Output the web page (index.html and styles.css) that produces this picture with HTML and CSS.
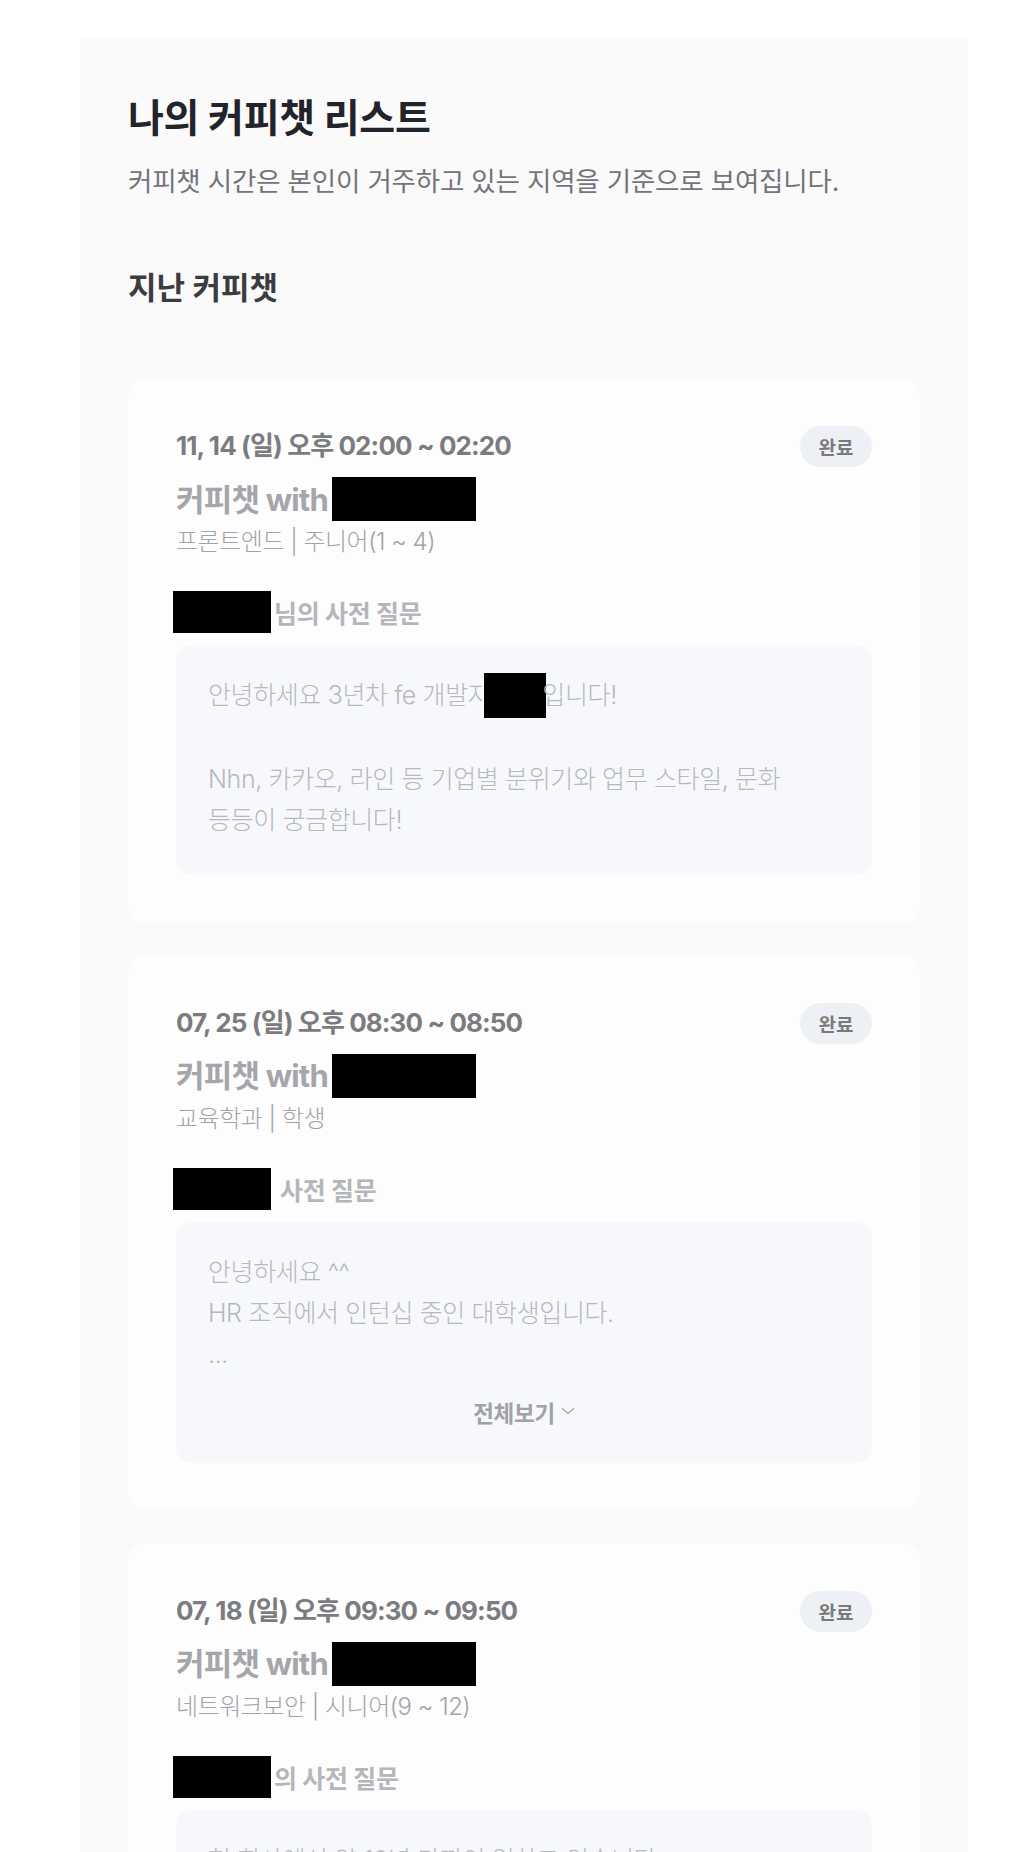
FILE: index.html
```html
<!DOCTYPE html>
<html lang="ko">
<head>
<meta charset="utf-8">
<title>나의 커피챗 리스트</title>
<link rel="stylesheet" href="styles.css">
</head>
<body>
<main class="panel">
  <h1 class="page-title">나의 커피챗 리스트</h1>
  <p class="page-desc">커피챗 시간은 본인이 거주하고 있는 지역을 기준으로 보여집니다.</p>
  <h2 class="section-title">지난 커피챗</h2>

  <section class="chat-list">
    <article class="chat-card">
      <div class="card-head">
        <span class="chat-date">11, 14 (일) 오후 02:00 ~ 02:20</span>
        <span class="badge">완료</span>
      </div>
      <div class="chat-with">커피챗 with<span class="redact redact-name"></span></div>
      <div class="chat-spec">프론트엔드 | 주니어(1 ~ 4)</div>
      <div class="q-label"><span class="redact redact-label"></span><span class="q-text">님의 사전 질문</span></div>
      <div class="q-box">
        <p class="q-body">안녕하세요 3년차 fe 개발자<span class="redact redact-inline"></span>입니다!<br><br>Nhn, 카카오, 라인 등 기업별 분위기와 업무 스타일, 문화 등등이 궁금합니다!</p>
      </div>
    </article>

    <article class="chat-card">
      <div class="card-head">
        <span class="chat-date">07, 25 (일) 오후 08:30 ~ 08:50</span>
        <span class="badge">완료</span>
      </div>
      <div class="chat-with">커피챗 with<span class="redact redact-name"></span></div>
      <div class="chat-spec">교육학과 | 학생</div>
      <div class="q-label"><span class="redact redact-label"></span><span class="q-text q-text-wide">사전 질문</span></div>
      <div class="q-box">
        <p class="q-body">안녕하세요 ^^<br>HR 조직에서 인턴십 중인 대학생입니다.<br>...</p>
        <div class="more">전체보기<svg class="chev" width="14" height="8" viewBox="0 0 14 8"><path d="M1 1.2 L7 6.6 L13 1.2" fill="none" stroke="#a9aaaf" stroke-width="1.3"/></svg></div>
      </div>
    </article>

    <article class="chat-card">
      <div class="card-head">
        <span class="chat-date">07, 18 (일) 오후 09:30 ~ 09:50</span>
        <span class="badge">완료</span>
      </div>
      <div class="chat-with">커피챗 with<span class="redact redact-name"></span></div>
      <div class="chat-spec">네트워크보안 | 시니어(9 ~ 12)</div>
      <div class="q-label"><span class="redact redact-label"></span><span class="q-text">의 사전 질문</span></div>
      <div class="q-box">
        <p class="q-body">현 회사에서 약 10년 가까이 일하고 있습니다.<br>이직 관련해서 궁금한 점이 있습니다.</p>
      </div>
    </article>
  </section>
</main>
</body>
</html>
```

FILE: styles.css
```css
* { box-sizing: border-box; }

html, body {
  margin: 0;
  padding: 0;
  background: #ffffff;
}

body {
  font-family: "Inter", "Noto Sans CJK KR", sans-serif;
  overflow: hidden;
}

.panel {
  margin: 38px 0 0 80px;
  width: 888px;
  min-height: 1814px;
  padding: 56px 48px 0;
  background: #fafafa;
}

.page-title {
  margin: 0;
  font-size: 39px;
  line-height: 48px;
  font-weight: 700;
  color: #23242b;
  letter-spacing: -0.3px;
}

.page-desc {
  margin: 20px 0 0;
  font-size: 26.5px;
  line-height: 38px;
  font-weight: 400;
  color: #73747b;
  letter-spacing: -0.2px;
}

.section-title {
  margin: 68px 0 0;
  font-size: 31px;
  line-height: 40px;
  font-weight: 700;
  color: #3b3c42;
}

.chat-list {
  margin-top: 70px;
  display: flex;
  flex-direction: column;
  gap: 32px;
}

.chat-card {
  background: #fdfdfd;
  border-radius: 16px;
  padding: 48px;
  box-shadow: 0 0 3px rgba(0, 0, 0, 0.025);
}

.card-head {
  display: flex;
  justify-content: space-between;
  align-items: center;
  height: 41px;
}

.chat-date {
  font-size: 26px;
  line-height: 36px;
  margin-top: -1px;
  font-weight: 700;
  color: #7b7c80;
  letter-spacing: -0.9px;
}

.badge {
  display: inline-flex;
  align-items: center;
  justify-content: center;
  width: 72px;
  height: 41px;
  border-radius: 21px;
  background: #edf0f4;
  color: #7a7a7c;
  font-size: 19px;
  font-weight: 700;
}

.chat-with {
  margin-top: 8px;
  height: 44px;
  display: flex;
  align-items: center;
  font-size: 31px;
  font-weight: 700;
  color: #a5a6ab;
  letter-spacing: -0.8px;
}

.redact {
  display: inline-block;
  background: #000;
  flex: none;
}

.redact-name {
  width: 144px;
  height: 44px;
  margin-left: 4px;
  margin-top: 4px;
}

.chat-spec {
  margin-top: 6px;
  font-size: 24px;
  line-height: 34px;
  font-weight: 300;
  color: #a2a3a8;
  letter-spacing: -0.5px;
}

.q-label {
  margin-top: 32px;
  height: 42px;
  display: flex;
  align-items: center;
}

.redact-label {
  width: 98px;
  height: 42px;
  margin-left: -3px;
}

.q-text {
  margin-left: 3px;
  font-size: 25px;
  font-weight: 700;
  color: #b5b6bb;
  letter-spacing: -0.3px;
}

.q-text-wide {
  margin-left: 9px;
}

.q-box {
  margin-top: 12px;
  background: #f7f8fb;
  border-radius: 16px;
  padding: 30px 32px 34px;
}

.q-body {
  margin: 0;
  font-size: 25px;
  line-height: 41px;
  font-weight: 300;
  color: #b7b8bd;
  letter-spacing: -0.4px;
  word-break: keep-all;
}

.redact-inline {
  width: 62px;
  height: 45px;
  vertical-align: middle;
  margin: -4px -4px 0 -6px;
}

.more {
  margin-top: 20px;
  height: 34px;
  display: flex;
  align-items: center;
  justify-content: center;
  font-size: 22.5px;
  font-weight: 700;
  color: #a1a2a7;
  letter-spacing: -0.3px;
}

.chev {
  margin-left: 6px;
  margin-top: -2px;
}
```
